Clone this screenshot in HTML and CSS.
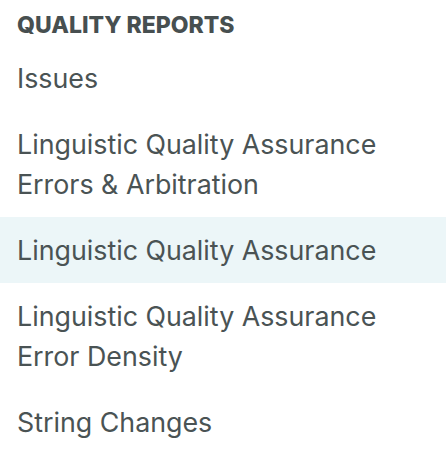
FILE: index.html
```html
<!DOCTYPE html>
<html lang="en">
<head>
<meta charset="utf-8">
<title>Quality Reports</title>
<link rel="stylesheet" href="styles.css">
</head>
<body>
<nav class="report-nav">
  <h2 class="report-nav__title">QUALITY REPORTS</h2>
  <ul class="report-nav__list">
    <li class="report-nav__item">Issues</li>
    <li class="report-nav__item">Linguistic Quality Assurance<br>Errors &amp; Arbitration</li>
    <li class="report-nav__item report-nav__item--active">Linguistic Quality Assurance</li>
    <li class="report-nav__item">Linguistic Quality Assurance<br>Error Density</li>
    <li class="report-nav__item">String Changes</li>
  </ul>
</nav>
</body>
</html>
```
FILE: styles.css
```css
html, body {
  margin: 0;
  padding: 0;
  background: #ffffff;
}
body {
  font-family: Inter, "Liberation Sans", sans-serif;
  color: #4a5354;
}
.report-nav {
  width: 446px;
}
.report-nav__title {
  margin: 0;
  padding: 10px 17px 0;
  font-size: 23px;
  line-height: 30px;
  font-weight: 800;
  color: #474f50;
  height: 45px;
  box-sizing: border-box;
}
.report-nav__list {
  list-style: none;
  margin: 0;
  padding: 0;
}
.report-nav__item {
  padding: 13px 17px;
  font-size: 26.8px;
  line-height: 40px;
}
.report-nav__item--active {
  background: #ecf6f8;
}
```
